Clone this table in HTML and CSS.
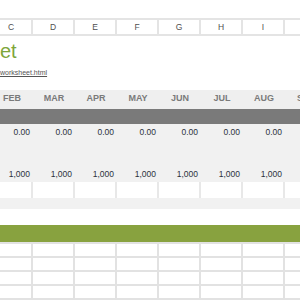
FILE: index.html
```html
<!DOCTYPE html>
<html>
<head>
<meta charset="utf-8">
<link rel="stylesheet" href="styles.css">
</head>
<body>
<div class="sheet">
  <div class="topgap"></div>
  <div class="row colhead">
    <div class="c">C</div><div class="c">D</div><div class="c">E</div><div class="c">F</div>
    <div class="c">G</div><div class="c">H</div><div class="c">I</div><div class="c">J</div>
  </div>
  <div class="title">et</div>
  <a class="link" href="#">worksheet.html</a>
  <div class="row months">
    <div class="c">FEB</div><div class="c">MAR</div><div class="c">APR</div><div class="c">MAY</div>
    <div class="c">JUN</div><div class="c">JUL</div><div class="c">AUG</div><div class="c">SEP</div>
  </div>
  <div class="darkbar"></div>
  <div class="panel">
    <div class="row vals v1">
      <div class="c">0.00</div><div class="c">0.00</div><div class="c">0.00</div><div class="c">0.00</div>
      <div class="c">0.00</div><div class="c">0.00</div><div class="c">0.00</div><div class="c">0.00</div>
    </div>
    <div class="row vals v2">
      <div class="c">1,000</div><div class="c">1,000</div><div class="c">1,000</div><div class="c">1,000</div>
      <div class="c">1,000</div><div class="c">1,000</div><div class="c">1,000</div><div class="c">1,000</div>
    </div>
    <div class="row inputs">
      <div class="c"></div><div class="c"></div><div class="c"></div><div class="c"></div>
      <div class="c"></div><div class="c"></div><div class="c"></div><div class="c"></div>
    </div>
  </div>
  <div class="whitegap"></div>
  <div class="greenbar"></div>
  <div class="grid">
    <div class="row gr"><div class="c"></div><div class="c"></div><div class="c"></div><div class="c"></div><div class="c"></div><div class="c"></div><div class="c"></div><div class="c"></div></div>
    <div class="row gr"><div class="c"></div><div class="c"></div><div class="c"></div><div class="c"></div><div class="c"></div><div class="c"></div><div class="c"></div><div class="c"></div></div>
    <div class="row gr"><div class="c"></div><div class="c"></div><div class="c"></div><div class="c"></div><div class="c"></div><div class="c"></div><div class="c"></div><div class="c"></div></div>
    <div class="row gr"><div class="c"></div><div class="c"></div><div class="c"></div><div class="c"></div><div class="c"></div><div class="c"></div><div class="c"></div><div class="c"></div></div>
  </div>
</div>
</body>
</html>
```
FILE: styles.css
```css
html, body {
  margin: 0;
  padding: 0;
  background: #ffffff;
  overflow: hidden;
}
body {
  width: 300px;
  height: 300px;
  font-family: "Liberation Sans", Arial, sans-serif;
}
.sheet {
  width: 300px;
  overflow: hidden;
}
.topgap {
  height: 18px;
}
.row {
  display: flex;
  margin-left: -9px;
  width: 336px;
}
.row .c {
  flex: 0 0 42px;
  box-sizing: border-box;
}
.colhead {
  height: 18px;
  box-sizing: border-box;
  border-top: 2px solid #e4e4e4;
  border-bottom: 2px solid #e4e4e4;
}
.colhead .c {
  border-right: 2px solid #e4e4e4;
  font-size: 8.5px;
  line-height: 14px;
  text-align: center;
  color: #505050;
}
.title {
  margin-top: 3px;
  height: 24px;
  line-height: 24px;
  font-size: 20px;
  color: #7ea63a;
}
.link {
  display: block;
  margin-top: 5px;
  height: 9px;
  line-height: 9px;
  font-size: 7px;
  color: #555;
  text-decoration: underline;
}
.months {
  margin-top: 13px;
  height: 19px;
  background: #efefef;
}
.months .c {
  text-align: center;
  font-size: 9px;
  font-weight: bold;
  line-height: 16px;
  color: #7a7a7a;
}
.darkbar {
  height: 15px;
  background: #7a7a7a;
}
.panel {
  background: #f1f1f1;
  padding-bottom: 11px;
}
.vals .c {
  text-align: right;
  padding-right: 3px;
  font-size: 8.5px;
  color: #2c323c;
}
.v1 {
  height: 17px;
}
.v1 .c {
  line-height: 17px;
}
.v2 {
  margin-top: 25px;
  height: 16px;
}
.v2 .c {
  line-height: 16px;
}
.inputs {
  height: 16px;
}
.inputs .c {
  background: #ffffff;
  border-right: 2px solid #e8e8e8;
}
.whitegap {
  height: 16px;
}
.greenbar {
  height: 17px;
  background: #88a23f;
}
.grid {
  border-top: 2px solid #e2e2e2;
}
.gr {
  height: 14px;
}
.gr .c {
  border-right: 2px solid #e2e2e2;
  border-bottom: 2px solid #e2e2e2;
}
```
